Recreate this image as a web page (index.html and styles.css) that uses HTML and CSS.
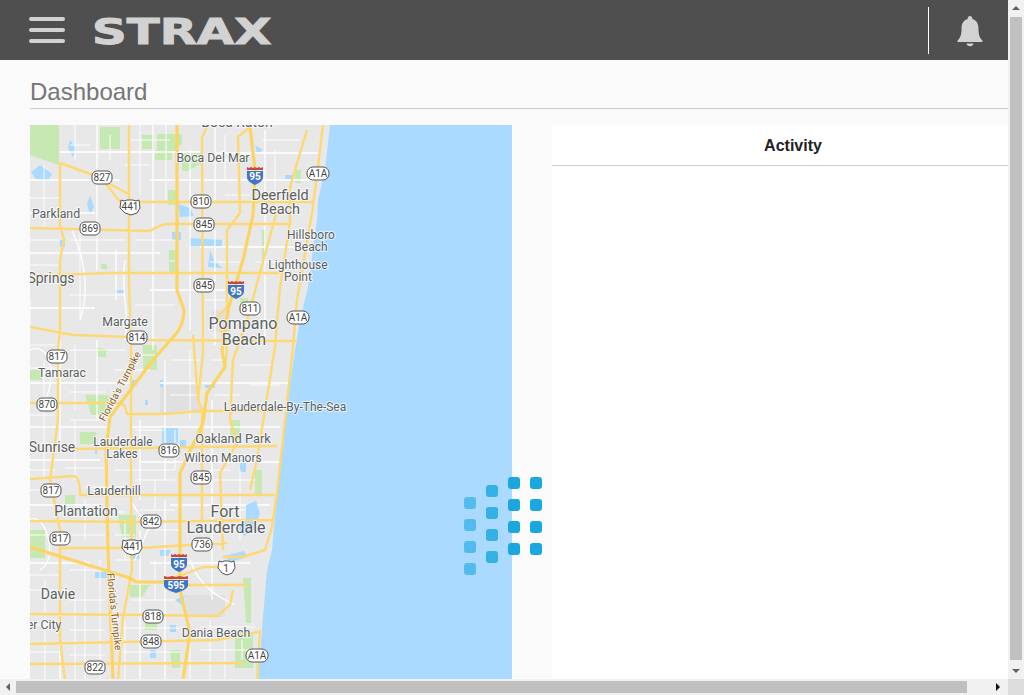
FILE: index.html
```html
<!DOCTYPE html>
<html lang="en">
<head>
  <meta charset="UTF-8" />
  <title>Dashboard</title>
  <link rel="stylesheet" href="styles.css">
</head>
<body>
  <div class="window">
    <div class="page">
      <header class="topbar">
        <div class="menu-icon"><span></span><span></span><span></span></div>
        <div class="logo"><span>STRAX</span></div>
        <div class="topbar-right">
          <div class="bell-box">
            <svg class="bell" width="28" height="32" viewBox="0 0 28 32">
              <path d="M14 1c-1.4 0-2.3 1-2.3 2.3v.6C7.6 5 5.6 8.500 5.600 12.600c0 6.400-1 10.400-4.100 13.200-.5.500-.2 1.200.5 1.200h24c.7 0 1-.7.5-1.200-3.100-2.800-4.100-6.800-4.100-13.200 0-4.100-2-7.600-6.100-8.700v-.6C16.300 2 15.400 1 14 1z"/>
              <path d="M10.500 28.500h7c-.3 1.700-1.800 2.800-3.500 2.800s-3.200-1.100-3.500-2.800z"/>
            </svg>
          </div>
        </div>
      </header>

      <main class="content">
        <h1 class="page-title">Dashboard</h1>
        <div class="panels">
          <div class="map-panel">
            <svg class="map" width="482" height="555" viewBox="30 125 482 555">
              <rect class="land" x="30" y="125" width="482" height="555"/>

              <!-- parks -->
              <path class="park" d="M30 125h29v40l-29-10zM100 127h20v22h-20zM142 135h12v14h-12zM157 134h25v10l-10 10h-15zM155 150h17v10h-17zM168 190h9v15h-9zM182 153h20v10l-14 8h-6zM169 250h8v10h-8zM169 262h8v10h-8zM101 264h6v5h-6zM96 357h10v-8l-10-2zM143 345h14v25h-14zM85 395h24v20h-18zM80 432h16v12h-16zM118 515h18v22h-14zM30 530h15v28h-15zM230 420h10v20h-10zM255 470h7v26h-7zM130 585h20l-8 12h-12zM145 620h12v10h-12zM235 632h18v36h-18zM243 578h8v45h-5zM170 650h10v18h-8zM65 495h10v10h-10zM30 370h12v10h-12zM262 230h4v28h-4zM295 170h6v13h-6zM240 298h8v12h-8z"/>
              <path class="urban" d="M160 385h40v28h-40zM185 595h40v22h-40zM212 310h18v22h-18z"/>

              <!-- canals and lakes -->
              <path class="lake" d="M40 165l12 9-4 7-12-2-5-7zM70 140l6 8-3 9-5-9zM90 195l4 12-4 8-3-11zM178 204l12 4 4 8-14 1zM190 238l32 2v6h-32zM210 250l5 12 8 6-15-1zM172 232h9v8h-9zM115 290h10v3h-10zM160 380h3v7h-3zM162 428h16v15h-16zM180 440h6v8h-6zM130 555h10v4h-10zM95 572h15l-4 6h-11zM160 550h11l-3 6h-8zM150 650h6v8h-6zM60 240h5v7h-5zM145 400h3v5h-3zM95 445h2v9h-2zM175 600l10-5-3 10zM170 625h6v7h-6zM130 380h7v5h-7zM255 145l8 5-6 4zM285 175h8v4h-8zM240 460h6v12h-6zM205 385h10v3h-10z"/>

              <!-- minor streets -->
              <path class="street" d="M60 152H200M215 153H320M30 180H120M150 180H330M30 213H95M30 253H160M200 247H310M150 290H225M30 308H95M30 383H130M160 383H290M30 427H110M130 427H280M30 460H100M140 462H280M30 505H100M170 505H270M30 563H90M150 563H250M97 125V270M153 125V350M116 250V300M97 340V420M140 420V500M140 530V680M60 340V450M60 560V680M165 360V480M165 500V680M215 125V200M215 230V345M265 130V340M212 400V600M190 150V330M72 230C85 260 90 290 80 320M125 260C120 300 130 300 125 340M30 350C50 340 60 380 40 410M30 520C45 510 60 560 40 570M130 500L150 530M150 525L135 560M190 560C200 590 225 600 235 605"/>
              <path class="lane" d="M30 198H60M70 145H90M125 165H150M130 140H170M225 160H245M262 140H300M225 195H250M30 240H60M70 240H125M135 240H175M210 262H240M255 262H275M30 265H60M70 295H125M135 305H175M205 300H225M30 345H55M70 350H125M135 355H155M210 360H225M240 365H275M30 368H60M70 392H105M115 370H150M170 360H200M30 415H55M70 420H105M135 430H165M170 395H200M215 395H240M250 385H280M30 470H55M65 468H105M115 470H175M210 470H230M30 490H55M85 487H125M135 480H175M210 480H255M85 512H125M140 510H175M210 510H260M30 535H55M70 535H105M115 535H135M155 530H180M30 575H60M70 570H105M115 560H135M30 590H55M70 600H105M130 600H175M30 625H55M70 630H105M120 628H180M200 627H255M30 652H60M70 655H105M120 652H180M200 650H250M75 125V160M44 165V225M80 230V320M110 135V160M140 125V195M166 125V200M225 135V180M275 150V200M30 300V325M44 360V480M75 345V410M75 420V480M85 500V540M85 560V680M45 580V680M125 520V560M125 620V680M155 480V510M155 560V600M240 470V540M190 350V420M175 430V470M210 620V680M225 625V680M242 640V660M75 600V680M100 560V680M190 640V680"/>

              <!-- water -->
              <path class="water" d="M330 125L325 170L318 200L317 220L308 287L300 320L295 350L285 417L277 493L272 550L267 570L263 617L258 680H512V125z"/>
              <path class="lake" d="M246 505l10-4 4 12-6 16-10 7-6-8 8-9zM224 556l20-5 3 6-16 5z"/>

              <!-- highways -->
              <path class="road" d="M129 125V280L131 345L131 497L132 570L123 617L118 680M60 163L93 175L130 195M103 180L128 212M60 163V225L64 240L60 260V330L58 350V420L50 480L60 530V640L65 680M30 228L150 231Q160 224 170 224H290M130 202H313M30 276L110 273H280M30 327L73 335L130 337L147 340L297 341M30 403H120Q125 403 127 414H163L203 411H283M73 449L277 446M30 479L73 476Q80 476 80 495H130L275 495M30 521L130 522L273 520M60 548H140L190 545L227 543M187 585H247M230 567L203 567L190 572L163 582M30 614L143 615L217 616L230 605L233 590M30 644L217 640L258 632M30 664L243 663M202 137L203 353L198 400L202 410V520M207 127L202 137M238 137L240 213L227 230V307L217 317L227 350L225 367M250 127L238 137M278 207L247 320L233 360L230 420L237 443L220 473L223 550M323 125L313 207L297 300L293 347L277 493L272 527L265 550L243 557H223M260 630L257 680M307 130L290 187V223L280 287L275 347L257 460L250 490M193 335L198 400"/>
              <path class="road-major" d="M250 127L255 170L253 215L243 260L228 310L222 350L225 367L207 393L203 423L180 473V560L180 590L190 633L183 680M30 547L127 577L137 582H163L190 585M177 125V290L184 310Q184 325 175 335L153 360L110 417L106 450L108 550L113 680"/>

              <!-- shields -->
              <g class="shield"><rect x="92" y="171" width="20" height="13" rx="5"/><text x="102" y="181">827</text></g>
              <g class="shield"><rect x="191" y="195" width="20" height="13" rx="5"/><text x="201" y="205">810</text></g>
              <g class="shield"><rect x="194" y="218" width="20" height="13" rx="5"/><text x="204" y="228">845</text></g>
              <g class="shield"><rect x="80" y="222" width="20" height="13" rx="5"/><text x="90" y="232">869</text></g>
              <g class="shield"><rect x="194" y="279" width="20" height="13" rx="5"/><text x="204" y="289">845</text></g>
              <g class="shield"><rect x="240" y="302" width="20" height="13" rx="5"/><text x="250" y="312">811</text></g>
              <g class="shield"><rect x="127" y="331" width="20" height="13" rx="5"/><text x="137" y="341">814</text></g>
              <g class="shield"><rect x="47" y="350" width="20" height="13" rx="5"/><text x="57" y="360">817</text></g>
              <g class="shield"><rect x="37" y="398" width="20" height="13" rx="5"/><text x="47" y="408">870</text></g>
              <g class="shield"><rect x="159" y="444" width="20" height="13" rx="5"/><text x="169" y="454">816</text></g>
              <g class="shield"><rect x="191" y="471" width="20" height="13" rx="5"/><text x="201" y="481">845</text></g>
              <g class="shield"><rect x="41" y="484" width="20" height="13" rx="5"/><text x="51" y="494">817</text></g>
              <g class="shield"><rect x="141" y="515" width="20" height="13" rx="5"/><text x="151" y="525">842</text></g>
              <g class="shield"><rect x="50" y="532" width="20" height="13" rx="5"/><text x="60" y="542">817</text></g>
              <g class="shield"><rect x="192" y="538" width="20" height="13" rx="5"/><text x="202" y="548">736</text></g>
              <g class="shield"><rect x="143" y="610" width="20" height="13" rx="5"/><text x="153" y="620">818</text></g>
              <g class="shield"><rect x="141" y="635" width="20" height="13" rx="5"/><text x="151" y="645">848</text></g>
              <g class="shield"><rect x="85" y="661" width="20" height="13" rx="5"/><text x="95" y="671">822</text></g>
              <g class="shield"><rect x="307" y="167" width="22" height="13" rx="6"/><text x="318" y="177">A1A</text></g>
              <g class="shield"><rect x="287" y="311" width="22" height="13" rx="6"/><text x="298" y="321">A1A</text></g>
              <g class="shield"><rect x="246" y="649" width="22" height="13" rx="6"/><text x="257" y="659">A1A</text></g>
              <g class="shield"><path d="M121 200l3 1 3-1h6l3 1 3-1 1 8-3 5-6 2-6-2-5-5z"/><text x="130" y="210">441</text></g>
              <g class="shield"><path d="M123 540l3 1 3-1h6l3 1 3-1 1 8-3 5-7 2-6-2-4-5z"/><text x="132" y="550">441</text></g>
              <g class="shield"><path d="M219 561l3 1 2-1h5l2 1 3-1 1 7-3 5-5 2-5-2-4-5z"/><text x="226" y="572">1</text></g>

              <g class="interstate"><path class="i-blue" d="M247 171h16v6c0 4-4 6-8 8-4-2-8-4-8-8z"/><path class="i-red" d="M247 170v-3l2 1 2-1 2 1 2-1 2 1 2-1 2 1 2-1v3z"/><text x="255" y="180">95</text></g>
              <g class="interstate"><path class="i-blue" d="M228 285h16v6c0 4-4 6-8 8-4-2-8-4-8-8z"/><path class="i-red" d="M228 284v-3l2 1 2-1 2 1 2-1 2 1 2-1 2 1 2-1v3z"/><text x="236" y="295">95</text></g>
              <g class="interstate"><path class="i-blue" d="M171 558h16v6c0 4-4 6-8 8-4-2-8-4-8-8z"/><path class="i-red" d="M171 557v-3l2 1 2-1 2 1 2-1 2 1 2-1 2 1 2-1v3z"/><text x="179" y="568">95</text></g>
              <g class="interstate"><path class="i-blue" d="M164 580h24v5c0 4-6 6-12 8-6-2-12-4-12-8z"/><path class="i-red" d="M164 579v-3l4 1 4-1 4 1 4-1 4 1 4-1v3z"/><text x="176" y="589">595</text></g>

              <!-- labels -->
              <text class="label-md" x="237" y="127">Boca Raton</text>
              <text class="label" x="213" y="162">Boca Del Mar</text>
              <text class="label-dl" x="280" y="200">Deerfield</text>
              <text class="label-dl" x="280" y="214">Beach</text>
              <text class="label-sm" x="311" y="239">Hillsboro</text>
              <text class="label-sm" x="311" y="251">Beach</text>
              <text class="label-sm" x="298" y="269">Lighthouse</text>
              <text class="label-sm" x="298" y="281">Point</text>
              <text class="label" x="56" y="218">Parkland</text>
              <text class="label-md" x="51" y="283">Springs</text>
              <text class="label" x="125" y="326">Margate</text>
              <text class="label-lg" x="243" y="329">Pompano</text>
              <text class="label-lg" x="244" y="345">Beach</text>
              <text class="label" x="62" y="377">Tamarac</text>
              <text class="label-sm" x="285" y="411">Lauderdale-By-The-Sea</text>
              <text class="label-oak" x="233" y="443">Oakland Park</text>
              <text class="label-md" x="52" y="452">Sunrise</text>
              <text class="label-sm" x="123" y="446">Lauderdale</text>
              <text class="label-sm" x="122" y="458">Lakes</text>
              <text class="label-sm" x="223" y="462">Wilton Manors</text>
              <text class="label" x="114" y="495">Lauderhill</text>
              <text class="label-md" x="86" y="516">Plantation</text>
              <text class="label-lg" x="225" y="517">Fort</text>
              <text class="label-lg" x="226" y="533">Lauderdale</text>
              <text class="label-md" x="58" y="599">Davie</text>
              <text class="label" x="44" y="629">er City</text>
              <text class="label" x="216" y="637">Dania Beach</text>
              <text class="label-road" transform="translate(123 388) rotate(-62)">Florida's Turnpike</text>
              <text class="label-road" transform="translate(111 612) rotate(84)">Florida's Turnpike</text>
            </svg>
          </div>
          <section class="activity">
            <div class="activity-head">Activity</div>
          </section>
        </div>
        <div class="spinner">
          <div class="dots dots-1"><i></i><i></i><i></i><i></i></div>
          <div class="dots dots-2"><i></i><i></i><i></i><i></i></div>
          <div class="dots"><i></i><i></i><i></i><i></i></div>
          <div class="dots"><i></i><i></i><i></i><i></i></div>
        </div>
      </main>
    </div>

    <div class="scroll-v">
      <div class="arrow arrow-up"></div>
      <div class="thumb-v"></div>
      <div class="arrow arrow-down"></div>
    </div>
    <div class="scroll-h">
      <div class="arrow arrow-left"></div>
      <div class="thumb-h"></div>
      <div class="arrow arrow-right"></div>
    </div>
    <div class="scroll-corner"></div>
  </div>
</body>
</html>
```

FILE: styles.css
```css
html, body {
  margin: 0;
  height: 100%;
  overflow: hidden;
}

body {
  font-family: "Liberation Sans", Arial, sans-serif;
  background: #fafafa;
}

.window {
  display: grid;
  grid-template-columns: 1008px 16px;
  grid-template-rows: 679px 16px;
  width: 1024px;
  height: 695px;
}

.page {
  overflow: hidden;
  background: #fafafa;
}

/* top bar */
.topbar {
  display: flex;
  align-items: center;
  height: 60px;
  padding-left: 29px;
  background: #4f4f4f;
}

.menu-icon {
  display: flex;
  flex-direction: column;
  gap: 7px;
  width: 36px;
}

.menu-icon span {
  height: 4px;
  border-radius: 2px;
  background: #d2d2d2;
}

.logo {
  width: 177px;
  margin-left: 27px;
  margin-top: 3px;
  color: #d2d2d2;
  font-family: "DejaVu Sans", sans-serif;
  font-size: 36px;
  font-weight: 700;
  line-height: 36px;
  -webkit-text-stroke: 1px #d2d2d2;
}

.logo span {
  display: inline-block;
  transform: scaleX(1.34);
  transform-origin: left center;
}

.topbar-right {
  display: flex;
  align-items: center;
  margin-left: auto;
}

.bell-box {
  display: flex;
  justify-content: center;
  align-items: center;
  width: 79px;
  height: 47px;
  margin-top: 1px;
  border-left: 1px solid #fff;
}

.bell {
  fill: #d2d2d2;
  margin-left: 2px;
}

/* content */
.content {
  position: relative;
  padding: 0 0 0 30px;
}

.page-title {
  margin: 0 0 16px;
  padding: 18px 0 0;
  height: 30px;
  border-bottom: 1px solid #ccc;
  color: #757575;
  font-size: 24px;
  font-weight: 400;
  line-height: 28px;
}

.panels {
  display: flex;
  gap: 40px;
  height: 555px;
}

.map-panel {
  width: 482px;
  overflow: hidden;
}

.map {
  display: block;
  font-family: Roboto, sans-serif;
}

.land { fill: #e8e8e8; }
.water { fill: #aadaff; }
.lake { fill: #aadaff; }
.park { fill: #c6e9b3; }
.urban { fill: #e0e0e0; }

.street {
  fill: none;
  stroke: #fff;
  stroke-width: 1.3;
}

.lane {
  fill: none;
  stroke: #fff;
  stroke-width: 0.9;
}

.road {
  fill: none;
  stroke: #fdd873;
  stroke-width: 2.4;
  stroke-linejoin: round;
}

.road-major {
  fill: none;
  stroke: #fcd462;
  stroke-width: 3.2;
  stroke-linejoin: round;
}

.shield rect, .shield path {
  fill: #fff;
  stroke: #555;
  stroke-width: 1;
}

.shield text {
  fill: #444;
  font-size: 10px;
  text-anchor: middle;
}

.i-blue { fill: #3f75c4; }
.i-red { fill: #c8493e; }

.interstate text {
  fill: #fff;
  font-size: 10px;
  font-weight: 700;
  text-anchor: middle;
}

.label, .label-sm, .label-md, .label-lg, .label-dl, .label-oak {
  fill: #5a5f63;
  stroke: #fff;
  stroke-width: 2px;
  stroke-opacity: 0.7;
  paint-order: stroke;
  text-anchor: middle;
}

.label { font-size: 12.300px; }
.label-sm { font-size: 12px; }
.label-md { font-size: 14px; }
.label-lg { font-size: 16px; }
.label-dl { font-size: 14.500px; }
.label-oak { font-size: 12.800px; }

.label-road {
  fill: #8a5a1e;
  stroke: #fff;
  stroke-width: 2px;
  stroke-opacity: 0.7;
  paint-order: stroke;
  font-size: 10px;
  text-anchor: middle;
}

/* activity panel */
.activity {
  flex: 1;
  background: #fff;
}

.activity-head {
  height: 40px;
  padding-left: 26px;
  border-bottom: 1px solid #ccc;
  color: #222;
  font-size: 16px;
  font-weight: 700;
  line-height: 41px;
  text-align: center;
}

/* loading spinner over the panels */
.spinner {
  position: absolute;
  left: 464px;
  top: 417px;
  display: flex;
  gap: 10px;
}

.dots {
  display: flex;
  flex-direction: column;
  gap: 10px;
}

.dots i {
  display: block;
  width: 12px;
  height: 12px;
  border-radius: 3px;
  background: #1aa7e0;
}

.dots-1 { margin-top: 20px; opacity: 0.6; }
.dots-2 { margin-top: 8px; opacity: 0.82; }

/* scrollbars */
.scroll-v {
  display: flex;
  flex-direction: column;
  align-items: center;
  background: #f1f1f1;
}

.thumb-v {
  flex: 1;
  width: 12px;
  margin: 0 0 5px;
  background: #c0c0c0;
}

.scroll-h {
  display: flex;
  align-items: center;
  background: #f1f1f1;
}

.thumb-h {
  width: 951px;
  height: 12px;
  background: #c0c0c0;
}

.scroll-corner { background: #dcdcdc; }

.arrow {
  flex: none;
  width: 0;
  height: 0;
  border-style: solid;
}

.arrow-up {
  margin: 6px 0 7px;
  border-width: 0 4px 4px;
  border-color: transparent transparent #606060;
}

.arrow-down {
  margin: 4px 0 6px;
  border-width: 4px 4px 0;
  border-color: #606060 transparent transparent;
}

.arrow-left {
  margin: 0 6px 0 6px;
  border-width: 4px 4px 4px 0;
  border-color: transparent #606060 transparent transparent;
}

.arrow-right {
  margin-left: 29px;
  border-width: 4px 0 4px 4px;
  border-color: transparent transparent transparent #101010;
}
```
